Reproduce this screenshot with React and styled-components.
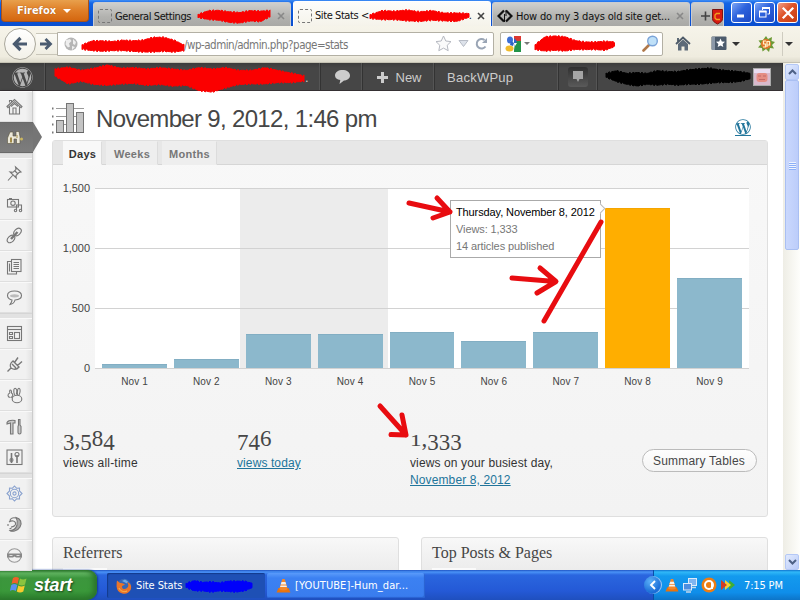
import React from 'react'
import styled, {createGlobalStyle} from 'styled-components'
import {FaWordpress, FaWordpressSimple} from 'react-icons/fa'


const ui = `'DejaVu Sans Condensed', 'DejaVu Sans', sans-serif`;
const arial = `'Liberation Sans', Arial, sans-serif`;
const serif = `'Liberation Serif', 'Times New Roman', serif`;

const GlobalStyle = createGlobalStyle`
  *{
    box-sizing:border-box;
  }
  body{
    margin:0;
    overflow:hidden;
    background:#fff;
  }
  svg{
    display:block;
    flex-shrink:0;
  }
`;

const Screen = styled.div`
  position:relative;
  width:800px;
  height:600px;
  display:flex;
  flex-direction:column;
  overflow:hidden;
  font-family:${arial};
  white-space:nowrap;
`;

/* ---------- title bar ---------- */

const TitleBar = styled.div`
  height:26px;
  display:flex;
  align-items:flex-end;
  padding-left:1px;
  background:linear-gradient(#3f8df5 0, #1466e6 3px, #0a55d6 14px, #0a4fd0 100%);
`;

const FirefoxButton = styled.div`
  align-self:flex-start;
  width:88px;
  height:22px;
  margin-right:4px;
  display:flex;
  align-items:center;
  justify-content:center;
  gap:7px;
  padding-right:2px;
  color:#fff;
  font-family:${ui};
  font-weight:bold;
  font-size:11px;
  border:1px solid #a8521a;
  border-top:0;
  border-radius:0 0 4px 4px;
  background:linear-gradient(#e8a04c, #e0812a 45%, #d4660f);
  text-shadow:0 0 1px #8a3c00;
`;

const CaretDown = styled.span`
  border:${p => p.$size || 4}px solid transparent;
  border-top-color:${p => p.$color || '#fff'};
  border-bottom:0;
`;

const Tab = styled.div`
  width:${p => p.$width || 198}px;
  height:${p => p.$active ? 25 : 24}px;
  margin-right:${p => p.$gap ?? 2}px;
  display:flex;
  align-items:center;
  padding:3px 5px 0 ${p => p.$pad ?? 4}px;
  font-family:${ui};
  font-size:11px;
  letter-spacing:${p => p.$spacing || 0}px;
  color:#111;
  background:${p => p.$active ? 'linear-gradient(#fdfdfb, #f5f3ea)' : 'linear-gradient(#cfcfcd, #b2b2af 60%, #a9a9a6)'};
  border:1px solid ${p => p.$active ? '#fff' : '#c9ccd2'};
  border-bottom:0;
  border-radius:3px 3px 0 0;
  overflow:hidden;
`;

const EmptyFavicon = styled.span`
  width:14px;
  height:14px;
  border:1px dashed #777;
  border-radius:2px;
  margin-right:3px;
  flex-shrink:0;
`;

const TabClose = styled.span`
  margin-left:auto;
`;

const WindowButtons = styled.div`
  display:flex;
  align-self:flex-start;
  gap:2px;
  margin:2px 2px 0 auto;
`;

const WindowButton = styled.div`
  width:21px;
  height:21px;
  display:flex;
  align-items:center;
  justify-content:center;
  border:1px solid #fff;
  border-radius:3px;
  background:${p => p.$close
    ? 'linear-gradient(135deg, #f0a088, #de5227 45%, #c63d13)'
    : 'linear-gradient(135deg, #7da6f5, #2d63dd 45%, #1c49c4)'};
`;

/* ---------- navigation bar ---------- */

const NavBar = styled.div`
  height:37px;
  display:flex;
  align-items:center;
  padding:0 0 1px 4px;
  background:linear-gradient(#f6f4ea, #efecdf 85%, #dedbcd);
  border-bottom:1px solid #c5c2b4;
`;

const BackButton = styled.div`
  width:32px;
  height:32px;
  border:1px solid #aaa89d;
  border-radius:50%;
  display:flex;
  align-items:center;
  justify-content:center;
  background:linear-gradient(#fff, #f3f1e8);
`;

const ForwardButton = styled.div`
  width:21px;
  height:22px;
  display:flex;
  align-items:center;
  justify-content:center;
  border:1px solid #c9c6b9;
  border-width:1px 0;
  background:linear-gradient(#fbfaf5, #f0eee3);
`;

const UrlField = styled.div`
  width:437px;
  height:24px;
  display:flex;
  align-items:center;
  padding:0 5px 0 6px;
  border:1px solid #b3b0a4;
  border-radius:0 2px 2px 0;
  background:#fff;
  font-family:${ui};
  font-size:11.5px;
  letter-spacing:-.5px;
  color:#777;
`;

const UrlPath = styled.span`
  padding-top:2px;
`;

const UrlActions = styled.div`
  margin-left:auto;
  display:flex;
  align-items:center;
  gap:6px;
`;

const SearchField = styled.div`
  width:163px;
  height:24px;
  margin-left:6px;
  display:flex;
  align-items:center;
  gap:3px;
  padding:0 3px 0 4px;
  border:1px solid #b3b0a4;
  border-radius:2px;
  background:#fff;
`;

const SearchGlass = styled.svg`
  margin-left:auto;
`;

const ToolButtons = styled.div`
  flex:1;
  display:flex;
  align-items:center;
  padding-left:12px;
`;

const ToolGroup = styled.div`
  display:flex;
  align-items:center;
  gap:5px;
  margin-left:${p => p.$left || 0}px;
`;

const ToolLine = styled.span`
  width:1px;
  height:24px;
  margin-left:7px;
  background:#cfccc0;
`;

/* ---------- page ---------- */

const Viewport = styled.div`
  height:507px;
  display:flex;
`;

const Page = styled.div`
  width:783px;
  display:flex;
  flex-direction:column;
  background:#fff;
`;

const AdminBar = styled.div`
  height:28px;
  flex-shrink:0;
  display:flex;
  color:#ccc;
  font-size:13px;
  background:linear-gradient(#3c3c3c, #464646 5px, #464646);
  border-bottom:1px solid #353033;
`;

const AdminItem = styled.div`
  width:${p => p.$width}px;
  display:flex;
  align-items:center;
  gap:${p => p.$gap ?? 8}px;
  padding-top:1px;
  padding-left:${p => p.$pad || 0}px;
  letter-spacing:${p => p.$spacing || 0}px;
  border-right:1px solid #333;
  box-shadow:${p => p.$plain ? 'none' : 'inset -1px 0 0 #555'};
`;

const NoticeBox = styled.span`
  width:20px;
  height:20px;
  display:flex;
  align-items:center;
  justify-content:center;
  border-radius:3px;
  background:linear-gradient(#303030, #5a5a5a);
`;

const Avatar = styled.span`
  width:18px;
  height:18px;
  display:flex;
  border:1px solid #aaa;
`;

const Body = styled.div`
  flex:1;
  min-height:0;
  display:flex;
`;

const SideMenu = styled.ul`
  list-style:none;
  margin:0;
  padding:0;
  width:33px;
  flex-shrink:0;
  background:#ececec;
  border-right:1px solid #ccc;
  box-shadow:1px 0 3px rgba(0,0,0,.12);
`;

const SideItem = styled.li`
  position:relative;
  height:31px;
  display:flex;
  align-items:center;
  justify-content:center;
  padding-right:3px;
  border-top:1px solid #f9f9f9;
  border-bottom:1px solid #dfdfdf;
  background:${p => p.$active ? 'linear-gradient(#6f6f6f, #7d7d7d)' : 'linear-gradient(90deg, #f1f1f1 80%, #e3e3e3)'};
  ${p => p.$active && `
    border-color:#6a6a6a;
    width:33px;
    &:after{
      content:'';
      position:absolute;
      left:33px;
      top:-1px;
      border:15.5px solid transparent;
      border-left:9px solid #757575;
      border-right:0;
    }
  `}
`;

const SideGap = styled.li`
  height:5px;
  background:#e2e2e2;
  border-top:1px solid #d5d5d5;
`;

const Content = styled.main`
  flex:1;
  display:flex;
  flex-direction:column;
  padding:8px 15px 0 19px;
  overflow:hidden;
`;

const PageHead = styled.div`
  height:41px;
  flex-shrink:0;
  display:flex;
  align-items:flex-start;
  justify-content:space-between;
`;

const PageTitle = styled.h2`
  margin:0;
  display:flex;
  align-items:center;
  gap:11px;
  height:38px;
  font-weight:normal;
  font-size:24px;
  letter-spacing:-.67px;
  color:#464646;
`;

const TitleText = styled.span`
  padding-top:2px;
`;

const LogoLink = styled.a`
  margin:20px 17px 0 0;
  color:#21759b;
  border-bottom:1px solid #21759b;
  height:17px;
`;

const Panel = styled.section`
  height:377px;
  flex-shrink:0;
  border:1px solid #dfdfdf;
  border-radius:3px;
  background:linear-gradient(#f8f8f8, #f3f3f3);
`;

const StatTabs = styled.div`
  height:24px;
  display:flex;
  gap:4px;
  padding-left:10px;
  background:#e7e7e7;
  border-bottom:1px solid #d6d6d6;
`;

const StatTab = styled.div`
  height:24px;
  width:${p => p.$width}px;
  text-align:center;
  line-height:25px;
  font-size:11px;
  font-weight:bold;
  letter-spacing:.3px;
  color:${p => p.$active ? '#333' : '#777'};
  background:${p => p.$active ? '#f8f8f8' : '#eee'};
  border:1px solid ${p => p.$active ? '#f8f8f8' : '#eee'};
  border-right-color:#dcdcdc;
`;

const Chart = styled.div`
  display:flex;
  align-items:flex-start;
  padding:23px 0 0 10px;
`;

const Scale = styled.div`
  width:27px;
  height:195px;
  margin-right:5px;
  margin-top:-7px;
  display:flex;
  flex-direction:column;
  justify-content:space-between;
  align-items:flex-end;
  font-size:11px;
  line-height:15px;
  letter-spacing:-.05px;
  color:#444;
`;

const Plot = styled.div`
  position:relative;
  width:654px;
`;

const Bars = styled.div`
  height:181px;
  display:flex;
  align-items:flex-end;
  gap:6.9px;
  padding:0 7px 1px;
  background:
    repeating-linear-gradient(#d2d2d2 0, #d2d2d2 1px, transparent 1px, transparent 60px),
    linear-gradient(90deg, transparent 145px, #ececec 145px, #ececec 293px, transparent 293px),
    #fff;
`;

const Bar = styled.div`
  flex:1;
  background:${p => p.$hot ? '#ffae00' : '#8cb8cc'};
  border-top:1px solid ${p => p.$hot ? '#f5a500' : '#82aec3'};
`;

const Days = styled.div`
  display:flex;
  gap:6.9px;
  padding:7px 7px 0;
`;

const Day = styled.span`
  flex:1;
  text-align:center;
  font-size:10px;
  line-height:12px;
  letter-spacing:.1px;
  color:#444;
`;

const Tooltip = styled.div`
  position:absolute;
  left:355px;
  top:12px;
  width:151px;
  height:58px;
  padding:3px 0 0 5px;
  border:1px solid #aaa;
  background:#fff;
  font-size:11px;
  line-height:17px;
  color:#777;
  &:after{
    content:'';
    position:absolute;
    right:-4px;
    top:4px;
    width:6px;
    height:6px;
    background:#fff;
    border:1px solid #bbb;
    border-width:1px 1px 0 0;
    transform:rotate(45deg);
  }
`;

const TooltipLine = styled.div`
  color:${p => p.$dark ? '#000' : '#777'};
  letter-spacing:${p => p.$dark ? -.11 : -.1}px;
`;

const Totals = styled.div`
  display:grid;
  grid-template-columns:174px 173px 231.5px auto;
  padding:36px 0 0 10px;
`;

const Total = styled.div`
  font-size:12px;
  line-height:17px;
  color:#333;
  letter-spacing:${p => p.$spacing || 0}px;
`;

const BigNumber = styled.div`
  height:31px;
  font-family:${serif};
  font-size:23px;
  line-height:29px;
  color:#464646;
  letter-spacing:0;
`;

const Digit = styled.span`
  display:inline-block;
  transform:${p => p.$low ? 'translateY(4px)' : p.$small ? 'scaleY(.75)' : 'none'};
  transform-origin:50% 73%;
`;

const StatLink = styled.a`
  color:#21759b;
  text-decoration:underline;
`;

const SummaryButton = styled.button`
  width:115px;
  height:23px;
  margin-top:25px;
  padding:0;
  font-family:${arial};
  font-size:12px;
  letter-spacing:.2px;
  color:#464646;
  border:1px solid #bbb;
  border-radius:12px;
  background:linear-gradient(#fefefe, #f4f4f4);
`;

const Boxes = styled.div`
  display:flex;
  flex-shrink:0;
  gap:22px;
  margin-top:20px;
`;

const Box = styled.section`
  flex:1;
  height:60px;
  padding-left:10px;
  border:1px solid #dfdfdf;
  border-radius:3px 3px 0 0;
  background:linear-gradient(#f8f8f8, #ececec 32px);
`;

const BoxTitle = styled.h3`
  margin:0;
  height:30px;
  font-family:${serif};
  font-weight:normal;
  font-size:16px;
  line-height:30px;
  color:#464646;
`;

const BoxTab = styled.div`
  width:44px;
  height:10px;
  background:#fafafa;
`;

/* ---------- scrollbar ---------- */

const Scrollbar = styled.div`
  width:17px;
  display:flex;
  flex-direction:column;
  padding:1px 1px 0 2px;
  background:linear-gradient(90deg, #eeede5, #fefefb);
`;

const ScrollButton = styled.div`
  height:16px;
  display:flex;
  align-items:center;
  justify-content:center;
  border:1px solid #b4c8f6;
  border-radius:2px;
  background:linear-gradient(135deg, #e1eafe, #b9cbf8);
`;

const ScrollThumb = styled.div`
  height:170px;
  display:flex;
  flex-direction:column;
  align-items:center;
  justify-content:center;
  gap:1px;
  margin-bottom:auto;
  border:1px solid #a9bff2;
  border-radius:2px;
  background:linear-gradient(90deg, #cad8fd, #bccdfa);
`;

const Grip = styled.span`
  width:7px;
  height:1px;
  background:#eef4fe;
  box-shadow:0 1px 0 #8cb0f8;
`;

/* ---------- taskbar ---------- */

const Taskbar = styled.div`
  height:30px;
  display:flex;
  color:#fff;
  font-family:${ui};
  font-size:11px;
  background:linear-gradient(#1f54c4 0, #4a93f7 2px, #2a66df 5px, #2459d6 70%, #1f4fbe);
`;

const StartButton = styled.div`
  width:97px;
  display:flex;
  align-items:center;
  gap:5px;
  padding-left:10px;
  margin-right:10px;
  border-radius:0 9px 10px 0;
  background:linear-gradient(#2c7a2e 0, #63b663 3px, #3c963d 8px, #3a983a 70%, #2a7a2b);
  box-shadow:inset -4px 0 5px #2b752c, 1px 0 2px #12379a;
  font-family:${arial};
  font-size:18px;
  font-weight:bold;
  font-style:italic;
  letter-spacing:-.2px;
  text-shadow:1px 1px 2px #1a401a;
`;

const Task = styled.div`
  width:158px;
  height:25px;
  margin:3px 2px 0 0;
  display:flex;
  align-items:center;
  gap:4px;
  padding-left:9px;
  border-radius:2px;
  letter-spacing:${p => p.$spacing || 0}px;
  background:${p => p.$pressed ? '#1e50b5' : 'linear-gradient(#5a9bfb, #3c81f2 5px, #397cee)'};
  box-shadow:${p => p.$pressed ? 'inset 1px 1px 1px #123a8c' : 'inset -1px -1px 1px #2a62d0'};
`;

const Tray = styled.div`
  position:relative;
  margin-left:auto;
  width:147px;
  display:flex;
  align-items:center;
  gap:4px;
  padding-left:11px;
  background:linear-gradient(#1074cf 0, #30b8f8 2px, #139aee 6px, #0f8eea 75%, #0d74c8);
  border-left:1px solid #0b4ea6;
`;

const TrayToggle = styled.span`
  position:absolute;
  left:-10px;
  top:6px;
  width:18px;
  height:18px;
  border-radius:50%;
  display:flex;
  align-items:center;
  justify-content:center;
  background:radial-gradient(circle at 35% 30%, #5cb0f8, #1467d4 70%);
  box-shadow:inset -1px 0 1px #a9d8fb;
`;

const Clock = styled.span`
  margin-left:5px;
  letter-spacing:-.15px;
`;

const Marks = styled.svg`
  position:absolute;
  left:0;
  top:0;
  pointer-events:none;
`;

const ScribbleSvg = styled.svg`
  overflow:visible;
  margin-left:${p => p.$left || 0}px;
  margin-top:${p => p.$top || 0}px;
`;

// marker stroke that covers private text, tops and bottoms give its outline along the width (0..1)
const Scribble = ({width, height, color = '#fb0000', left, top, tops, bottoms}) => {
  const at = (list, t) => {
    const p = t * (list.length - 1)
    const i = Math.min(Math.floor(p), list.length - 2)
    return list[i] + (list[i + 1] - list[i]) * (p - i)
  }
  const upper = []
  const lower = []
  for (let x = 0, i = 0; x <= width; x += 1.5, i++) {
    const wobble = Math.sin(i * 2.3) * .5 + (i % 2 ? .4 : -.4)
    upper.push(`${x},${(at(tops, x / width) * height + wobble).toFixed(1)}`)
    lower.unshift(`${x},${(at(bottoms, x / width) * height - wobble).toFixed(1)}`)
  }
  return (
    <ScribbleSvg width={width} height={height} $left={left} $top={top}>
      <polygon points={[...upper, ...lower].join(' ')} fill={color} stroke={color} strokeWidth="1" strokeLinejoin="round"/>
    </ScribbleSvg>
  )
}

const Cross = ({size = 8, color = '#888', weight = 1.6}) => (
  <svg width={size} height={size} viewBox="0 0 8 8">
    <path d="M1 1l6 6M7 1l-6 6" stroke={color} strokeWidth={weight}/>
  </svg>
)

const Cone = ({size = 15}) => (
  <svg width={size} height={size} viewBox="0 0 15 15">
    <path d="M2.5 10h10l2 4.5H.5z" fill="#e8730c"/>
    <path d="M6.3 1h2.4l3 10.3c-2 1.4-6.4 1.4-8.4 0z" fill="#f3872a"/>
    <path d="M5.5 4h4l.8 2.6H4.7zM4 9l.6-1.6h5.8L11 9z" fill="#f6f0ea"/>
  </svg>
)

const BarsIcon = () => (
  <svg width="33" height="34" viewBox="0 0 33 34">
    <path d="M4 7.5h28M4 15.5h28M4 23.5h28" stroke="#999"/>
    <path d="M.5 6.5v2M.5 14.5v2M.5 22.5v2M.5 30.5v2" stroke="#777" strokeWidth="2"/>
    <g fill="#c4c4c4" stroke="#757575">
      <rect x="4.5" y="19.5" width="7" height="12"/>
      <rect x="14.5" y="2.5" width="7" height="29"/>
      <rect x="24.5" y="11.5" width="7" height="20"/>
    </g>
    <path d="M4 31.5h28" stroke="#666"/>
  </svg>
)

const menuIcons = {
  home: <><path d="M1 8.5L8.5 1.5 16 8.5l-1 1.2L8.5 3.7 2 9.7zM3.5 4.5v-2h2v1"/><path d="M3.5 8.5v7.5h10V8.5M7 15.5V10h3v5.5M5 8.5l3.5-3 3.5 3"/></>,
  pin: <path d="M9.5 2l5.500 5-2 .5-3 3 .3 2.500L4 7l3 .3L10 4.500zM7 10L2 15.500M9 6l3 3"/>,
  media: <><rect x="1.5" y="3.5" width="11" height="7.5"/><circle cx="7" cy="7.200" r="2.200"/><path d="M3 2.500h3M10.500 14.500V9h5v5.500"/><circle cx="9.500" cy="14.500" r="1.200"/><circle cx="14.500" cy="14.500" r="1.200"/></>,
  link: <><ellipse cx="11.500" cy="5" rx="4.300" ry="3" transform="rotate(-45 11.500 5)"/><ellipse cx="5" cy="12" rx="4.300" ry="3" transform="rotate(-45 5 12)"/><path d="M5 12l6.500-7" strokeWidth="2.400"/></>,
  pages: <><rect x="5.5" y="1.5" width="9.5" height="12"/><path d="M5 3.500H1.500v12.500h9V14M7.500 4.500h5.500M7.500 6.500h5.500M7.500 8.500h5.500M7.500 10.500h5.500M3.500 5.500v8"/></>,
  comment: <><path d="M8.500 2C4 2 1.500 4 1.500 6.500S4 10.800 6 11c0 2-1 3-2 4.500 2.500-.5 4.500-2 5-4.500 4-.2 6.500-2 6.500-4.500S13 2 8.500 2z"/><ellipse cx="8.500" cy="6.800" rx="4.500" ry="1.600" fill="#bbb" stroke="none"/></>,
  widgets: <><rect x="1.5" y="1.5" width="14" height="14"/><path d="M2 4.500h13"/><rect x="8.5" y="7.5" width="5" height="6"/><path d="M3.500 7.500h3v2h-3zM3.500 11.500h3v2h-3z"/></>,
  plug: <path d="M1.500 15.500l3.500-3.500M5 12c-1.500-2-.5-5 2-7l6 6c-2 2.500-5 3-8 1zM8.500 6.500L12 1.500M11.500 9.500L16 5.500M6 8l4 4" strokeWidth="1.400"/>,
  users: <><path d="M4 6C2.500 2 6 2 5.500 6c2 1 1.500 4-.5 4.500M4 6C1 7 1.500 10.500 4.500 10.500M8.500 8C7 3 8 1 9.500 1.500s1.500 3 .8 6M11.500 8C11 3 12 1 13.300 1.500s1 4-.3 6.500"/><ellipse cx="11" cy="12" rx="4.800" ry="3.800"/></>,
  tools: <path d="M1 4.500c1.500-2.500 4-2.500 8-2v2.500H7v11H4.500V5L1 6zM12.500 1.500h1.500V7l1 1.500V14.500a1.500 1.500 0 01-3 0V8.500l.5-1.500z" fill="#ccc"/>,
  settings: <><rect x="1" y="1" width="15" height="14.500"/><path d="M5.500 4v5M5.500 9v5M11 6v8" strokeWidth="1.600"/><circle cx="5.500" cy="11" r="1.500"/><circle cx="11" cy="5.500" r="2"/></>,
  gear: <><path d="M8.500 1l2 2.200 3-.2v3L16 8.500 13.500 11v3l-3-.2-2 2.200-2-2.200-3 .2v-3L1 8.500 3.500 6V3l3 .2z"/><circle cx="8.500" cy="8.500" r="4.200"/><circle cx="8.500" cy="8.500" r="1.600"/></>,
  moon: <><path d="M10 1.500c4.500 1 6.500 5 4 9.500S5.500 16 4 14.500c3 0 6-2 7-5.500s.5-5-1-7.500z" fill="#aaa"/><path d="M10 2C6 1 4 3 4 5M3 6c3-2 6-1 6.500 1S8 11 5 11M2 8v2M3.500 13l2-1"/></>,
  mask: <><circle cx="8.500" cy="8.500" r="6.800" stroke="#999"/><path d="M1 6.500h15v4H10L8.500 9.500 7 10.500H1z" fill="#888" stroke="none"/><path d="M3.500 8.500h3M10.500 8.500h3" stroke="#ddd"/></>,
}

const MenuIcon = ({name}) => (
  <svg width="17" height="17" viewBox="0 0 17 17" fill="none" stroke={name === 'gear' ? '#8ba3cf' : '#777'} strokeWidth="1.1">
    {menuIcons[name]}
  </svg>
)

const Binoculars = () => (
  <svg width="17" height="14" viewBox="0 0 17 14">
    <path d="M3 1h3v4h3V.5h3l1 5.500v6.500H9.500V8H7v4.500H.5V7z" fill="#ece8d8" stroke="#5a5540" strokeWidth=".6"/>
    <path d="M3 6.500h2v5H3zM9.500 4h1v3h-1z" fill="#a18b49"/>
    <circle cx="14.500" cy="8" r="1.500" fill="#ccb760"/>
  </svg>
)

const lowDigits = '34579'
const smallDigits = '012'

const OldStyle = ({value}) => (
  <BigNumber>
    {value.split('').map((c, i) => (
      <Digit key={i} $low={lowDigits.includes(c)} $small={smallDigits.includes(c)}>{c}</Digit>
    ))}
  </BigNumber>
)

const Chevron = ({up, color = '#4d6185'}) => (
  <svg width="9" height="6" viewBox="0 0 9 6">
    <path d={up ? 'M1 5l3.500-3.500L8 5' : 'M1 1l3.500 3.500L8 1'} fill="none" stroke={color} strokeWidth="2"/>
  </svg>
)


const BrowserTabs = () => (
  <TitleBar>
    <FirefoxButton>Firefox <CaretDown/></FirefoxButton>
    <Tab $spacing={-.42}>
      <EmptyFavicon/>General Settings
      <Scribble width={73} height={14} left={7} tops={[.4, .12, .1, .2, .25, .12, .15, .1]} bottoms={[.6, .75, .8, .95, 1, .85, .9, .5]}/>
      <TabClose><Cross/></TabClose>
    </Tab>
    <Tab $active $spacing={-.42} $gap={1}>
      <EmptyFavicon/>Site Stats &lt;
      <Scribble width={99} height={12} left={1} tops={[.4, .05, .1, 0, .15, .05, .25, .25, .3]} bottoms={[.7, .8, .8, .9, .95, .85, .9, .95, .6]}/>.
      <TabClose><Cross color="#444"/></TabClose>
    </Tab>
    <Tab $spacing={-.18} $gap={1}>
      <svg width="16" height="14" viewBox="0 0 16 14">
        <path d="M7 1.500L1.500 7 7 12.500M9 1.500L14.500 7 9 12.500" fill="none" stroke="#111" strokeWidth="2.200"/>
        <path d="M7.500 5v8M9 1v6" stroke="#111"/>
      </svg>
      &nbsp;How do my 3 days old site get...
      <TabClose><Cross/></TabClose>
    </Tab>
    <Tab $width={33} $gap={0} $pad={8}>
      <svg width="24" height="17" viewBox="0 0 24 17">
        <path d="M1 8h9M5.500 3.500v9" stroke="#444" strokeWidth="1.600"/>
        <path d="M12.500 1.500h10v9c0 3-2.500 4-5 5.500-2.500-1.500-5-2.500-5-5.500z" fill="#d61a12" stroke="#7a1410"/>
        <path d="M20 5.500h-3.500L15 7v3l1.500 1.500H20" fill="none" stroke="#f2a01e" strokeWidth="1.300"/>
      </svg>
    </Tab>
    <WindowButtons>
      <WindowButton>
        <svg width="13" height="13"><path d="M2 10h7" stroke="#fff" strokeWidth="3"/></svg>
      </WindowButton>
      <WindowButton>
        <svg width="13" height="13" fill="none" stroke="#fff">
          <path d="M4.500 4V2h7v6H9.500"/><rect x="1.500" y="5.500" width="6.500" height="5.500"/><path d="M4 2h8M1 5.500h7.500" strokeWidth="2"/>
        </svg>
      </WindowButton>
      <WindowButton $close><Cross size={14} color="#fff" weight={1.3}/></WindowButton>
    </WindowButtons>
  </TitleBar>
)

const Navigation = () => (
  <NavBar>
    <BackButton>
      <svg width="16" height="16"><path d="M15 8H3M8.500 2L2.500 8l6 6" fill="none" stroke="#4a5b70" strokeWidth="3.200"/></svg>
    </BackButton>
    <ForwardButton>
      <svg width="13" height="14"><path d="M0 7h10M5.500 2l5 5-5 5" fill="none" stroke="#4a5b70" strokeWidth="2.800"/></svg>
    </ForwardButton>
    <UrlField>
      <svg width="14" height="14">
        <circle cx="7" cy="7" r="6.500" fill="#b5b5b5"/>
        <path d="M2 3l4-1 1.500 2L5 6.500l1 3-2 1-2.500-3zM9 2l3 3-1 3-2-1zM8 9l3 1-3 3z" fill="#eee"/>
      </svg>
      <Scribble width={102} height={14} left={4} top={2} tops={[.5, .2, .2, .25, .15, .2, .15, -.05, -.05, .15, .5]} bottoms={[.8, .9, .95, .9, .9, .95, 1, 1, .95, 1, .9]}/>
      <UrlPath>/wp-admin/admin.php?page=stats</UrlPath>
      <UrlActions>
        <svg width="17" height="17"><path d="M8.500 1l2.300 5 5.200.6-3.800 3.700 1 5.400-4.700-2.600-4.700 2.600 1-5.400L1 6.600 6.200 6z" fill="#fafafa" stroke="#b5b8c0"/></svg>
        <svg width="11" height="9"><path d="M1 1.500h9L5.500 7.500z" fill="#dde2ea" stroke="#b7bcc6"/></svg>
        <svg width="13" height="13"><path d="M10.500 9.500A4.800 4.800 0 119.500 3" fill="none" stroke="#9aa5b5" strokeWidth="2"/><path d="M7 6h5V1z" fill="#9aa5b5"/></svg>
      </UrlActions>
    </UrlField>
    <SearchField>
      <svg width="16" height="16">
        <rect width="16" height="16" fill="#fff"/>
        <path d="M9 0h7v5H9z" fill="#dd3830"/><path d="M9 5h7v11H9z" fill="#23944a"/>
        <ellipse cx="5" cy="4" rx="3" ry="3.500" fill="#3b6fd6"/><ellipse cx="4.500" cy="12.500" rx="4" ry="3" fill="#f0bb2c"/>
        <path d="M6 5l3 2-1 3-3-1zM9 11l3-6-3-3z" fill="#2d63c4"/><path d="M9 7h3l-2 3v4z" fill="#fff"/>
      </svg>
      <CaretDown $size={3} $color="#777"/>
      <Scribble width={80} height={15} left={2} top={-1} tops={[.6, .05, 0, .05, .3, .4, .4, .35, .4]} bottoms={[.9, 1, .95, 1, .9, .9, .9, .95, .7]}/>
      <SearchGlass width="17" height="17">
        <path d="M1.500 15.500l6-6" stroke="#b0784a" strokeWidth="2.600" strokeLinecap="round"/>
        <circle cx="10.500" cy="6" r="4.800" fill="#bfe0f8" stroke="#7aa3d8" strokeWidth="1.400"/>
      </SearchGlass>
    </SearchField>
    <ToolButtons>
      <svg width="16" height="15">
        <path d="M1 8l7-6.500L15 8M3 2v4" fill="none" stroke="#4d5a68" strokeWidth="1.800"/>
        <path d="M3 8l5-4.500L13 8v6.500H9.500v-4h-3v4H3z" fill="#5c6a79"/>
      </svg>
      <ToolGroup $left={20}>
        <svg width="16" height="15">
          <rect x=".5" y=".5" width="15" height="13.500" rx="1" fill="#4c5b6c"/>
          <path d="M1 1h3v13H1z" fill="#8b98a8"/>
          <path d="M9.500 2.500l1.300 3 3.200.3-2.400 2.100.7 3.200-2.800-1.700-2.800 1.700.7-3.200L5 5.800l3.200-.3z" fill="#fff"/>
        </svg>
        <CaretDown $color="#333"/>
      </ToolGroup>
      <ToolGroup $left={18}>
        <svg width="17" height="16">
          <path d="M8 0l2 3 4-2-.5 4 3.500 1-3 3 2 3.500-4-.5-1 4-3-3-3.500 2.500L4 12 0 11.500 3 8 .5 4.500 5 4z" fill="#6c9a35"/>
          <circle cx="8" cy="8" r="5" fill="#e2762a"/>
          <path d="M8 5H5.500v3h2v3H5M9 11V5.500h2.500V9H9" fill="none" stroke="#fff3c8" strokeWidth="1.200"/>
        </svg>
      </ToolGroup>
      <ToolLine/>
      <ToolGroup $left={2}><CaretDown $color="#333"/></ToolGroup>
    </ToolButtons>
  </NavBar>
)

const WpBar = () => (
  <AdminBar>
    <AdminItem $width={46} $pad={12}><FaWordpress size={21} color="#b5b5b5"/></AdminItem>
    <AdminItem $width={275} $pad={9} $gap={1}>
      <Scribble
        width={249} height={27} top={3}
        tops={[.15, .08, .2, .12, 0, .12, .1, .15, .1, .15, .2, .1, .15, .1, .2, .2, .1, .2, .3, .4]}
        bottoms={[.4, .7, .6, .72, .75, .7, .68, .75, .72, .78, .75, .95, 1, .85, .72, .7, .7, .65, .65, .6]}
      />
      .
    </AdminItem>
    <AdminItem $width={42} $pad={14}>
      <svg width="15" height="14"><path d="M7.500 0C11.500 0 15 2 15 5.500S11.500 10.500 9 10.500L4.500 14l.8-4C2 9.500 0 8 0 5.500 0 2 3.500 0 7.500 0z" fill="#ccc"/></svg>
    </AdminItem>
    <AdminItem $width={72} $pad={14} $gap={7.5}>
      <svg width="11" height="11"><path d="M0 5.500h11M5.500 0v11" stroke="#ccc" strokeWidth="3"/></svg>
      New
    </AdminItem>
    <AdminItem $width={124} $pad={12} $spacing={.25}>BackWPup</AdminItem>
    <AdminItem $width={39} $pad={9}>
      <NoticeBox>
        <svg width="12" height="12"><path d="M1 0h10v8H7.500L6 11 4.500 8H1z" fill="#a5a5a5"/></svg>
      </NoticeBox>
    </AdminItem>
    <AdminItem $width={185} $pad={8} $gap={3} $plain>
      <Scribble
        width={144} height={18} color="#000"
        tops={[.3, .15, .3, .25, .3, .15, .2, .2, .1, .05, 0, .1, .15, .2, .3]}
        bottoms={[.5, .75, .9, 1, .9, .95, .9, .95, .9, .9, .85, .8, .8, .75, .6]}
      />
      <Avatar>
        <svg width="16" height="16">
          <rect width="16" height="16" fill="#d9b9cc"/>
          <rect x="2.500" y="4" width="11" height="9" rx="3" fill="#e58d84"/>
          <path d="M4 7h3M9 7h3M5 10.500h6" stroke="#c26a68" strokeWidth="1.200"/>
          <path d="M0 0h16v4H0z" fill="#e9dcf0"/>
        </svg>
      </Avatar>
    </AdminItem>
  </AdminBar>
)

const Sidebar = () => {

  const groups = [
    ['pin', 'media', 'link', 'pages', 'comment'],
    ['widgets', 'plug', 'users', 'tools', 'settings'],
    ['gear', 'moon', 'mask'],
  ]

  return (
    <SideMenu>
      <SideItem><MenuIcon name="home"/></SideItem>
      <SideItem $active><Binoculars/></SideItem>
      {groups.map((group, i) => (
        <React.Fragment key={i}>
          <SideGap/>
          {group.map(name => (
            <SideItem key={name}><MenuIcon name={name}/></SideItem>
          ))}
        </React.Fragment>
      ))}
    </SideMenu>
  )
}

const StatsChart = () => {

  const views = [35, 75, 283, 287, 300, 229, 296, 1333, 746]

  return (
    <Chart>
      <Scale>
        {['1,500', '1,000', '500', '0'].map(n => <span key={n}>{n}</span>)}
      </Scale>
      <Plot>
        <Bars>
          {views.map((v, i) => (
            <Bar key={i} $hot={v === 1333} style={{height: v * .12}}/>
          ))}
        </Bars>
        <Days>
          {views.map((v, i) => <Day key={i}>Nov {i + 1}</Day>)}
        </Days>
        <Tooltip>
          <TooltipLine $dark>Thursday, November 8, 2012</TooltipLine>
          <TooltipLine>Views: 1,333</TooltipLine>
          <TooltipLine>14 articles published</TooltipLine>
        </Tooltip>
      </Plot>
    </Chart>
  )
}

const App = () => {
  return (
    <Screen>
      <GlobalStyle/>
      <BrowserTabs/>
      <Navigation/>

      <Viewport>
        <Page>
          <WpBar/>
          <Body>
            <Sidebar/>
            <Content>
              <PageHead>
                <PageTitle><BarsIcon/><TitleText>November 9, 2012, 1:46 pm</TitleText></PageTitle>
                <LogoLink><FaWordpressSimple size={16}/></LogoLink>
              </PageHead>

              <Panel>
                <StatTabs>
                  <StatTab $active $width={39}>Days</StatTab>
                  <StatTab $width={52}>Weeks</StatTab>
                  <StatTab $width={55}>Months</StatTab>
                </StatTabs>
                <StatsChart/>
                <Totals>
                  <Total $spacing={.2}><OldStyle value="3,584"/>views all-time</Total>
                  <Total $spacing={.1}><OldStyle value="746"/><StatLink>views today</StatLink></Total>
                  <Total $spacing={.12}>
                    <OldStyle value="1,333"/>views on your busiest day,<br/>
                    <StatLink>November 8, 2012</StatLink>
                  </Total>
                  <SummaryButton>Summary Tables</SummaryButton>
                </Totals>
              </Panel>

              <Boxes>
                <Box><BoxTitle>Referrers</BoxTitle><BoxTab/></Box>
                <Box><BoxTitle>Top Posts &amp; Pages</BoxTitle><BoxTab/></Box>
              </Boxes>
            </Content>
          </Body>
        </Page>
        <Scrollbar>
          <ScrollButton><Chevron up/></ScrollButton>
          <ScrollThumb><Grip/><Grip/><Grip/><Grip/></ScrollThumb>
          <ScrollButton><Chevron/></ScrollButton>
        </Scrollbar>
      </Viewport>

      <Taskbar>
        <StartButton>
          <svg width="19" height="18" viewBox="0 0 19 18">
            <path d="M3 2c2-1.500 4-1.500 6 0L7.500 8c-2-1.300-4-1.300-6 0z" fill="#f0602a"/>
            <path d="M10 2.500c2 1.300 4 1.300 6.500 0L15 8.500c-2 1.300-4.500 1.300-6.500 0z" fill="#8ac43f"/>
            <path d="M1.300 9c2-1.500 4-1.500 6 0L5.800 15c-2-1.300-4-1.300-6 0z" fill="#5a8ff0"/>
            <path d="M8.300 9.500c2 1.300 4 1.300 6.500 0l-1.500 6c-2 1.300-4.500 1.300-6.500 0z" fill="#f8cb2e"/>
          </svg>
          start
        </StartButton>
        <Task $pressed $spacing={-.1}>
          <svg width="16" height="16">
            <circle cx="8" cy="8" r="7.200" fill="#3567b8"/>
            <path d="M6 3l3-1.500 3 2-1 2z" fill="#6fa8e4"/>
            <path d="M1 2.500L4 5c3-.5 3 1 5 1-1 2-3 1-3 3s3 3 5 1 1.500-4 0-6c4 1 5 5 3.500 8A7.500 7.500 0 01.6 8.500C.5 6 .7 4 1 2.500z" fill="#e9752a"/>
            <path d="M3 10c1 3 5 4.500 8 3" fill="none" stroke="#f8b84c"/>
          </svg>
          Site Stats
          <Scribble width={67} height={12} color="#0000fb" tops={[.3, .05, .2, .15, .25, .1, .1, .1, .3]} bottoms={[.6, .9, .9, 1, .9, .95, 1, .9, .6]}/>
        </Task>
        <Task $spacing={.1}><Cone/>[YOUTUBE]-Hum_dar...</Task>
        <Tray>
          <TrayToggle>
            <svg width="8" height="10"><path d="M6 1L2 5l4 4" fill="none" stroke="#fff" strokeWidth="1.900"/></svg>
          </TrayToggle>
          <Cone size={14}/>
          <svg width="14" height="15">
            <rect x="5.500" y=".5" width="8" height="7" fill="#7fb5f0" stroke="#dcebfa"/>
            <rect x=".5" y="5.500" width="8" height="6.500" fill="#4c8ee0" stroke="#dcebfa"/>
            <path d="M3 14h5M9 9.500h4" stroke="#c8d8ea" strokeWidth="1.600"/>
          </svg>
          <svg width="16" height="16">
            <circle cx="8" cy="8" r="7.500" fill="#ee7d12"/>
            <circle cx="8" cy="8" r="4" fill="none" stroke="#fff" strokeWidth="2"/>
            <path d="M11 5v7" stroke="#fff" strokeWidth="2"/>
          </svg>
          <svg width="14" height="12">
            <path d="M8 1l6 5-6 5z" fill="#3fae35"/><path d="M4 1l6 5-6 5z" fill="#f2cf38"/><path d="M0 1l6 5-6 5z" fill="#d43c22"/>
          </svg>
          <Clock>7:15 PM</Clock>
        </Tray>
      </Taskbar>

      <Marks width="800" height="600" fill="none" stroke="#e80c10" strokeWidth="5" strokeLinecap="round" strokeLinejoin="round">
        <path d="M409 203l41 9M437 198l13 14-17 6"/>
        <path d="M512 278l43 3.500M540 268l16 13.500-19 11.500"/>
        <path d="M601 222l-57 99"/>
        <path d="M380 406l26 29M402 415l4 20-15-.5"/>
      </Marks>
    </Screen>
  )
}

export default App
